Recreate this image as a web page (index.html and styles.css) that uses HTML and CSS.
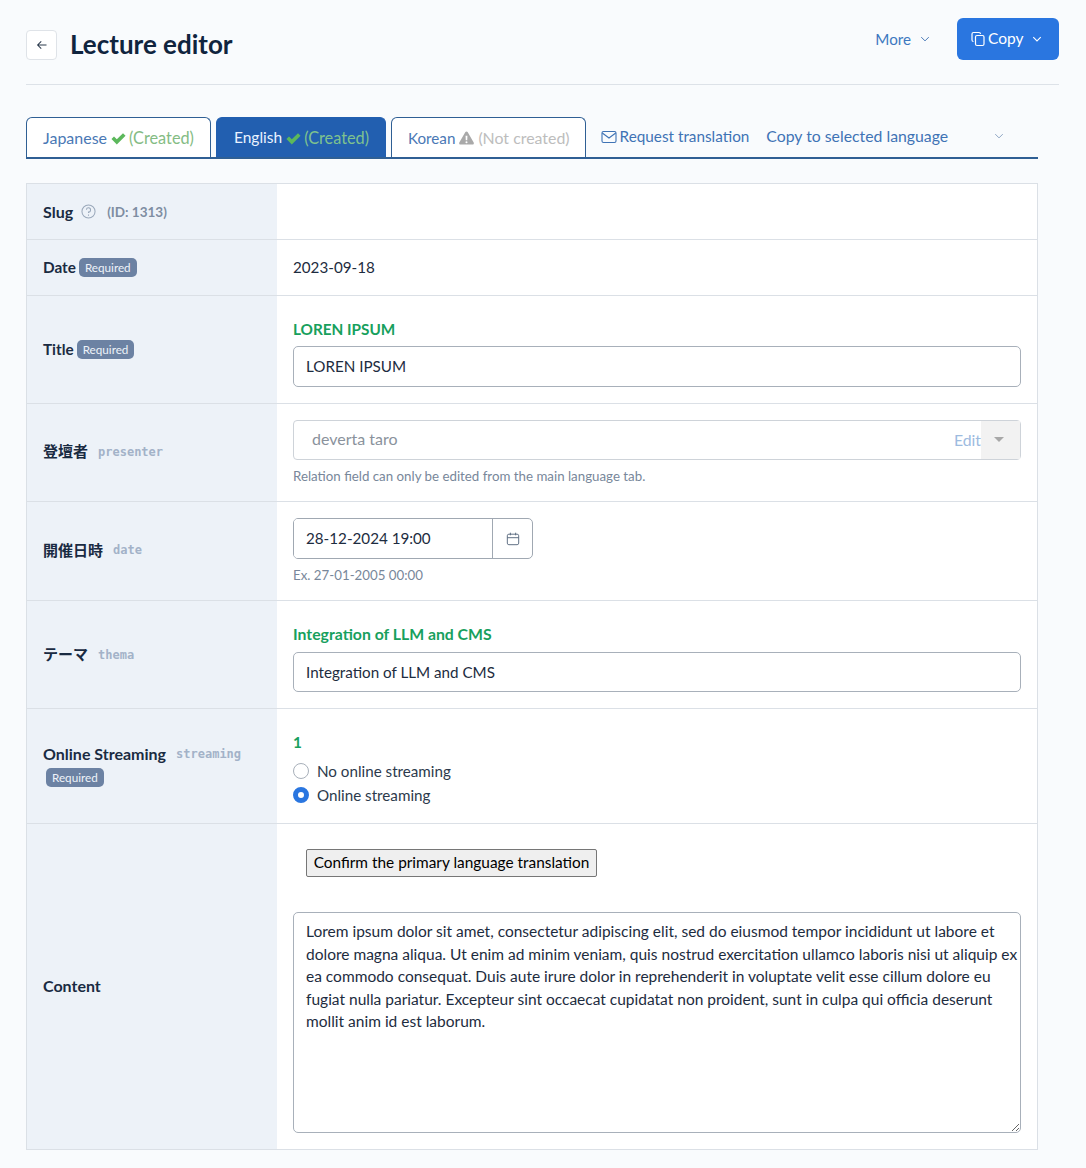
FILE: index.html
```html
<!DOCTYPE html>
<html lang="en">
<head>
<meta charset="utf-8">
<title>Lecture editor</title>
<link rel="stylesheet" href="styles.css">
</head>
<body>
<header class="page-head">
  <div class="head-left">
    <a class="back-btn" href="#" aria-label="Back"><svg width="12" height="12" viewBox="0 0 16 16" fill="none" stroke="currentColor" stroke-width="1.4"><path d="M14 8H2.5M7 3.2 2.200 8 7 12.800"/></svg></a>
    <h1 class="page-title">Lecture editor</h1>
  </div>
  <div class="head-right">
    <a class="more-link" href="#">More <svg class="chev" width="10" height="10" viewBox="0 0 16 16" fill="none" stroke="currentColor" stroke-width="1.6"><path d="M2 5l6 6 6-6"/></svg></a>
    <a class="copy-btn" href="#"><svg width="16" height="16" viewBox="0 0 16 16" fill="none" stroke="currentColor" stroke-width="1.2"><rect x="5.5" y="4.5" width="8.5" height="10" rx="1.5"/><path d="M3.500 10.500A1.500 1.500 0 0 1 2 9V3a1.500 1.500 0 0 1 1.500-1.500H9A1.500 1.500 0 0 1 10.500 3"/></svg><span>Copy</span><svg class="chev-white" width="10" height="10" viewBox="0 0 16 16" fill="none" stroke="currentColor" stroke-width="1.8"><path d="M2 5l6 6 6-6"/></svg></a>
  </div>
</header>

<nav class="tabs">
  <a class="tab" href="#"><span>Japanese</span><svg class="ic-check" width="15" height="15" viewBox="0 0 16 16"><path d="M.5 8.600 3.200 5.900l3 3L12.800 2.300 15.500 5 6.200 14.300z"/></svg><span class="st-ok">(Created)</span></a>
  <a class="tab tab-active" href="#"><span class="tab-en">English</span><svg class="ic-check" width="15" height="15" viewBox="0 0 16 16"><path d="M.5 8.600 3.200 5.900l3 3L12.800 2.300 15.500 5 6.200 14.300z"/></svg><span class="st-ok">(Created)</span></a>
  <a class="tab tab-ko-wrap" href="#"><span class="tab-ko">Korean</span><svg class="ic-warn" width="15" height="14" viewBox="0 0 16 15"><path fill-rule="evenodd" d="M8 .5c.5 0 .9.3 1.200.7l6.500 11.200c.5.9-.1 2.100-1.200 2.100H1.500c-1.100 0-1.700-1.200-1.200-2.100L6.800 1.200C7.100.8 7.500.5 8 .5zM7 5l.2 4.800h1.600L9 5zm1 6a1.100 1.100 0 1 0 0 2.200A1.100 1.100 0 0 0 8 11z"/></svg><span class="st-no">(Not created)</span></a>
  <a class="req-link" href="#"><svg width="16" height="16" viewBox="0 0 16 16" fill="none" stroke="currentColor" stroke-width="1.1"><rect x="1" y="2.500" width="14" height="11" rx="1.500"/><path d="M1.300 4 8 9l6.700-5"/></svg>Request translation</a>
  <div class="copy-select"><span>Copy to selected language</span><svg width="10" height="10" viewBox="0 0 16 16" fill="none" stroke="currentColor" stroke-width="1.600"><path d="M2 5l6 6 6-6"/></svg></div>
</nav>

<section class="form-table">
  <div class="row row-slug">
    <div class="lab"><span class="lab-name">Slug</span><svg class="help" width="15" height="15" viewBox="0 0 16 16" fill="none" stroke="currentColor" stroke-width="1.100"><circle cx="8" cy="8" r="7"/><path d="M5.800 6.200A2.200 2.200 0 1 1 8 8.500v1.200M8 11.300v1.100"/></svg><span class="id-note">(ID: 1313)</span></div>
    <div class="val"></div>
  </div>
  <div class="row row-date">
    <div class="lab"><span class="lab-name lab-short">Date</span><span class="badge">Required</span></div>
    <div class="val val-text">2023-09-18</div>
  </div>
  <div class="row">
    <div class="lab"><span class="lab-name lab-short">Title</span><span class="badge">Required</span></div>
    <div class="val val-src">
      <div class="src-text">LOREN IPSUM</div>
      <input class="txt" type="text" value="LOREN IPSUM">
    </div>
  </div>
  <div class="row">
    <div class="lab lab-up"><span class="lab-name cjk">登壇者</span><code class="key">presenter</code></div>
    <div class="val val-hint">
      <div class="relation">
        <span class="rel-name">deverta taro</span>
        <span class="rel-edit">Edit</span>
        <span class="rel-caret"></span>
      </div>
      <p class="hint">Relation field can only be edited from the main language tab.</p>
    </div>
  </div>
  <div class="row">
    <div class="lab lab-up"><span class="lab-name cjk">開催日時</span><code class="key">date</code></div>
    <div class="val val-hint">
      <div class="date-group">
        <input class="date-input" type="text" value="28-12-2024 19:00">
        <span class="date-btn"><svg width="14" height="14" viewBox="0 0 16 16" fill="none" stroke="currentColor" stroke-width="1.100"><rect x="1.500" y="2.500" width="13" height="12" rx="1.800"/><path d="M1.500 6.500h13M5 .8v3M11 .8v3"/></svg></span>
      </div>
      <p class="hint">Ex. 27-01-2005 00:00</p>
    </div>
  </div>
  <div class="row">
    <div class="lab"><span class="lab-name cjk">テーマ</span><code class="key">thema</code></div>
    <div class="val val-src">
      <div class="src-text src-theme">Integration of LLM and CMS</div>
      <input class="txt txt-theme" type="text" value="Integration of LLM and CMS">
    </div>
  </div>
  <div class="row">
    <div class="lab lab-wrap"><span class="lab-name">Online Streaming</span><code class="key">streaming</code><span class="badge badge-block">Required</span></div>
    <div class="val val-src">
      <div class="src-text">1</div>
      <label class="radio"><input type="radio" name="s">No online streaming</label>
      <label class="radio"><input type="radio" name="s" checked>Online streaming</label>
    </div>
  </div>
  <div class="row row-last">
    <div class="lab lab-up"><span class="lab-name">Content</span></div>
    <div class="val val-content">
      <button class="confirm" type="button">Confirm the primary language translation</button>
      <textarea class="area">Lorem ipsum dolor sit amet, consectetur adipiscing elit, sed do eiusmod tempor incididunt ut labore et dolore magna aliqua. Ut enim ad minim veniam, quis nostrud exercitation ullamco laboris nisi ut aliquip ex ea commodo consequat. Duis aute irure dolor in reprehenderit in voluptate velit esse cillum dolore eu fugiat nulla pariatur. Excepteur sint occaecat cupidatat non proident, sunt in culpa qui officia deserunt mollit anim id est laborum.</textarea>
    </div>
  </div>
</section>
</body>
</html>
```
FILE: styles.css
```css
* { box-sizing: border-box; }
html, body { margin: 0; padding: 0; }
body {
  background: #f9fbfd;
  color: #1d2c40;
  font-family: "Lato", "Noto Sans CJK JP", sans-serif;
  font-size: 15.2px;
  line-height: 1.5;
  padding: 0 27px 18px 26px;
}
a { text-decoration: none; }

.page-head {
  height: 85px;
  border-bottom: 1px solid #dde2e8;
  display: flex;
  justify-content: space-between;
  align-items: flex-start;
  padding-top: 18px;
}
.head-left { display: flex; align-items: center; gap: 13px; padding-top: 12px; }
.back-btn {
  width: 31px; height: 30px;
  border: 1px solid #dfe3e8;
  border-radius: 4px;
  background: #fff;
  color: #2b3a4d;
  display: flex; align-items: center; justify-content: center;
}
.page-title { margin: 0 0 2px; font-size: 26px; font-weight: 700; line-height: 28px; color: #10243e; }
.head-right { display: flex; align-items: flex-start; gap: 27px; }
.more-link { color: #3d78c0; display: flex; align-items: center; gap: 9px; height: 42px; font-size: 15.2px; }
.chev { color: #4a7ab8; }
.copy-btn {
  width: 102px; height: 42px;
  background: #2a76e0;
  color: #fff;
  border-radius: 6px;
  display: flex; align-items: center;
  padding-left: 13px;
  font-size: 15.5px;
}
.copy-btn span { margin-left: 2px; margin-right: 9px; margin-bottom: 1px; }

.tabs {
  width: 1012px;
  height: 42px;
  margin-top: 32px;
  border-bottom: 2px solid #2f5f94;
  display: flex;
  align-items: flex-start;
  gap: 5px;
}
.tab {
  height: 40px;
  border: 1px solid #2f5f94;
  border-bottom: 0;
  border-radius: 6px 6px 0 0;
  background: #fff;
  color: #4a78b5;
  padding: 1px 16px 0 16px;
  display: flex; align-items: center; gap: 4px;
  white-space: nowrap;
  font-size: 16px;
}
.tab svg { flex: none; }
.tab-active { background: #225fb0; border-color: #225fb0; color: #eaf3ff; padding: 1px 16px 0 17px; }
.tab-ko-wrap { padding-right: 15px; }
.tab-en { font-size: 15.5px; }
.tab-ko { font-size: 15.2px; }
.ic-check { fill: #5cb85c; }
.ic-warn { fill: #a9a9a9; }
.st-ok { color: #84bc84; font-size: 16.3px; margin-left: -1px; }
.tab-active .st-ok { color: #7fc28e; }
.st-no { color: #bdbdbd; font-size: 15.9px; }
.req-link {
  color: #3f73b5; display: flex; align-items: center; gap: 3px;
  margin-left: 10px; height: 39px; white-space: nowrap;
  font-size: 15.3px;
}
.copy-select {
  color: #3f73b5; width: 253px; height: 37px;
  margin-left: 12px;
  display: flex; align-items: center; justify-content: space-between;
  padding-right: 15px;
  white-space: nowrap;
  font-size: 15.8px;
}
.copy-select svg { color: #8fa6c4; }

.form-table {
  width: 1012px;
  margin-top: 24px;
  border: 1px solid #dbe0e6;
  background: #fff;
}
.row { display: flex; border-bottom: 1px solid #dbe0e6; }
.row-last { border-bottom: 0; }
.row-slug { height: 56px; }
.row-date { height: 56px; }
.lab {
  width: 250px; flex: none;
  background: #edf2f8;
  padding: 0 16px;
  display: flex; align-items: center; flex-wrap: wrap;
}
.lab-up { padding-bottom: 2px; }
.lab-name { font-weight: 700; color: #1a2b42; font-size: 16px; }
.lab-short { font-size: 15.3px; }
.cjk { font-family: "Noto Sans CJK JP", sans-serif; font-size: 15px; }
.badge {
  background: #6c82a3; color: #eef3f9;
  font-size: 11.7px; line-height: 19px; height: 19px;
  border-radius: 5px; padding: 0 6px; margin-left: 3px;
}
.badge-block { margin-top: 2px; }
.lab-wrap { align-content: center; padding-bottom: 3px; }
.key {
  font-family: "DejaVu Sans Mono", monospace;
  font-size: 12px; font-weight: 700; color: #a3b2c8;
  margin-left: 10px;
}
.help { color: #9aa8ba; margin-left: 8px; }
.id-note { color: #7e8da2; font-size: 13.5px; font-weight: 700; margin-left: 11px; margin-top: 1px; }
.val { flex: 1; padding: 16px; min-width: 0; }
.val-src { padding-top: 23px; }
.val-hint { padding-bottom: 15px; }
.val-text { display: flex; align-items: center; padding-top: 0; padding-bottom: 0; }
.src-text { color: #17a05d; font-weight: 700; line-height: 20px; margin: 0 0 7px; font-size: 15.3px; }
.src-theme { font-size: 15.8px; margin-bottom: 8px; }
.txt {
  display: block; width: 100%; height: 41px;
  border: 1px solid #a8b0ba; border-radius: 5px;
  padding: 0 12px 2px; font: inherit; color: #1d2c40; background: #fff;
}
.txt-theme { height: 40px; padding-bottom: 0; }
.relation {
  height: 40px; border: 1px solid #ced3d9; border-radius: 4px;
  display: flex; align-items: center; padding-left: 18px; background: #fff;
}
.rel-name { flex: 1; color: #8a929c; font-size: 16px; margin-bottom: 2px; }
.rel-edit { color: #9dbbdf; font-size: 15.8px; }
.rel-caret {
  width: 39px; height: 38px; background: #f2f2f2;
  position: relative;
}
.rel-caret::after {
  content: ""; position: absolute; left: 13px; top: 16px;
  border: 5px solid transparent; border-top: 5px solid #a8a8a8; border-bottom: 0;
}
.hint { margin: 6px 0 0; font-size: 13.3px; line-height: 20px; color: #78879a; }
.date-group {
  width: 240px; height: 41px; display: flex;
  border: 1px solid #a0a8b2; border-radius: 5px; background: #fff; overflow: hidden;
}
.date-input { width: 199px; border: 0; border-right: 1px solid #a0a8b2; padding: 0 12px; font: inherit; color: #1d2c40; }
.date-btn { flex: 1; display: flex; align-items: center; justify-content: center; color: #5b6b80; }
.radio { display: flex; align-items: center; gap: 8px; height: 24px; color: #2c3a4c; }
.radio input {
  appearance: none; margin: 0; width: 16px; height: 16px; border-radius: 50%;
  border: 1px solid #a8b0ba; background: #fff;
}
.radio input:checked { border: 5px solid #2a76e0; }
.val-content { padding: 25px 16px 16px; }
.confirm {
  display: block; margin: 0 0 35px 13px; width: 291px; height: 28px; padding: 0;
  font: inherit; font-size: 15.4px; color: #000; background: #efefef; border: 1px solid #767676; border-radius: 2px;
}
.area {
  display: block; width: 100%; height: 221px;
  border: 1px solid #a8b0ba; border-radius: 5px;
  padding: 7px 1px 8px 12px; font: inherit; font-size: 15.5px; line-height: 22.5px; color: #1d2c40; background: #fff;
}
```
